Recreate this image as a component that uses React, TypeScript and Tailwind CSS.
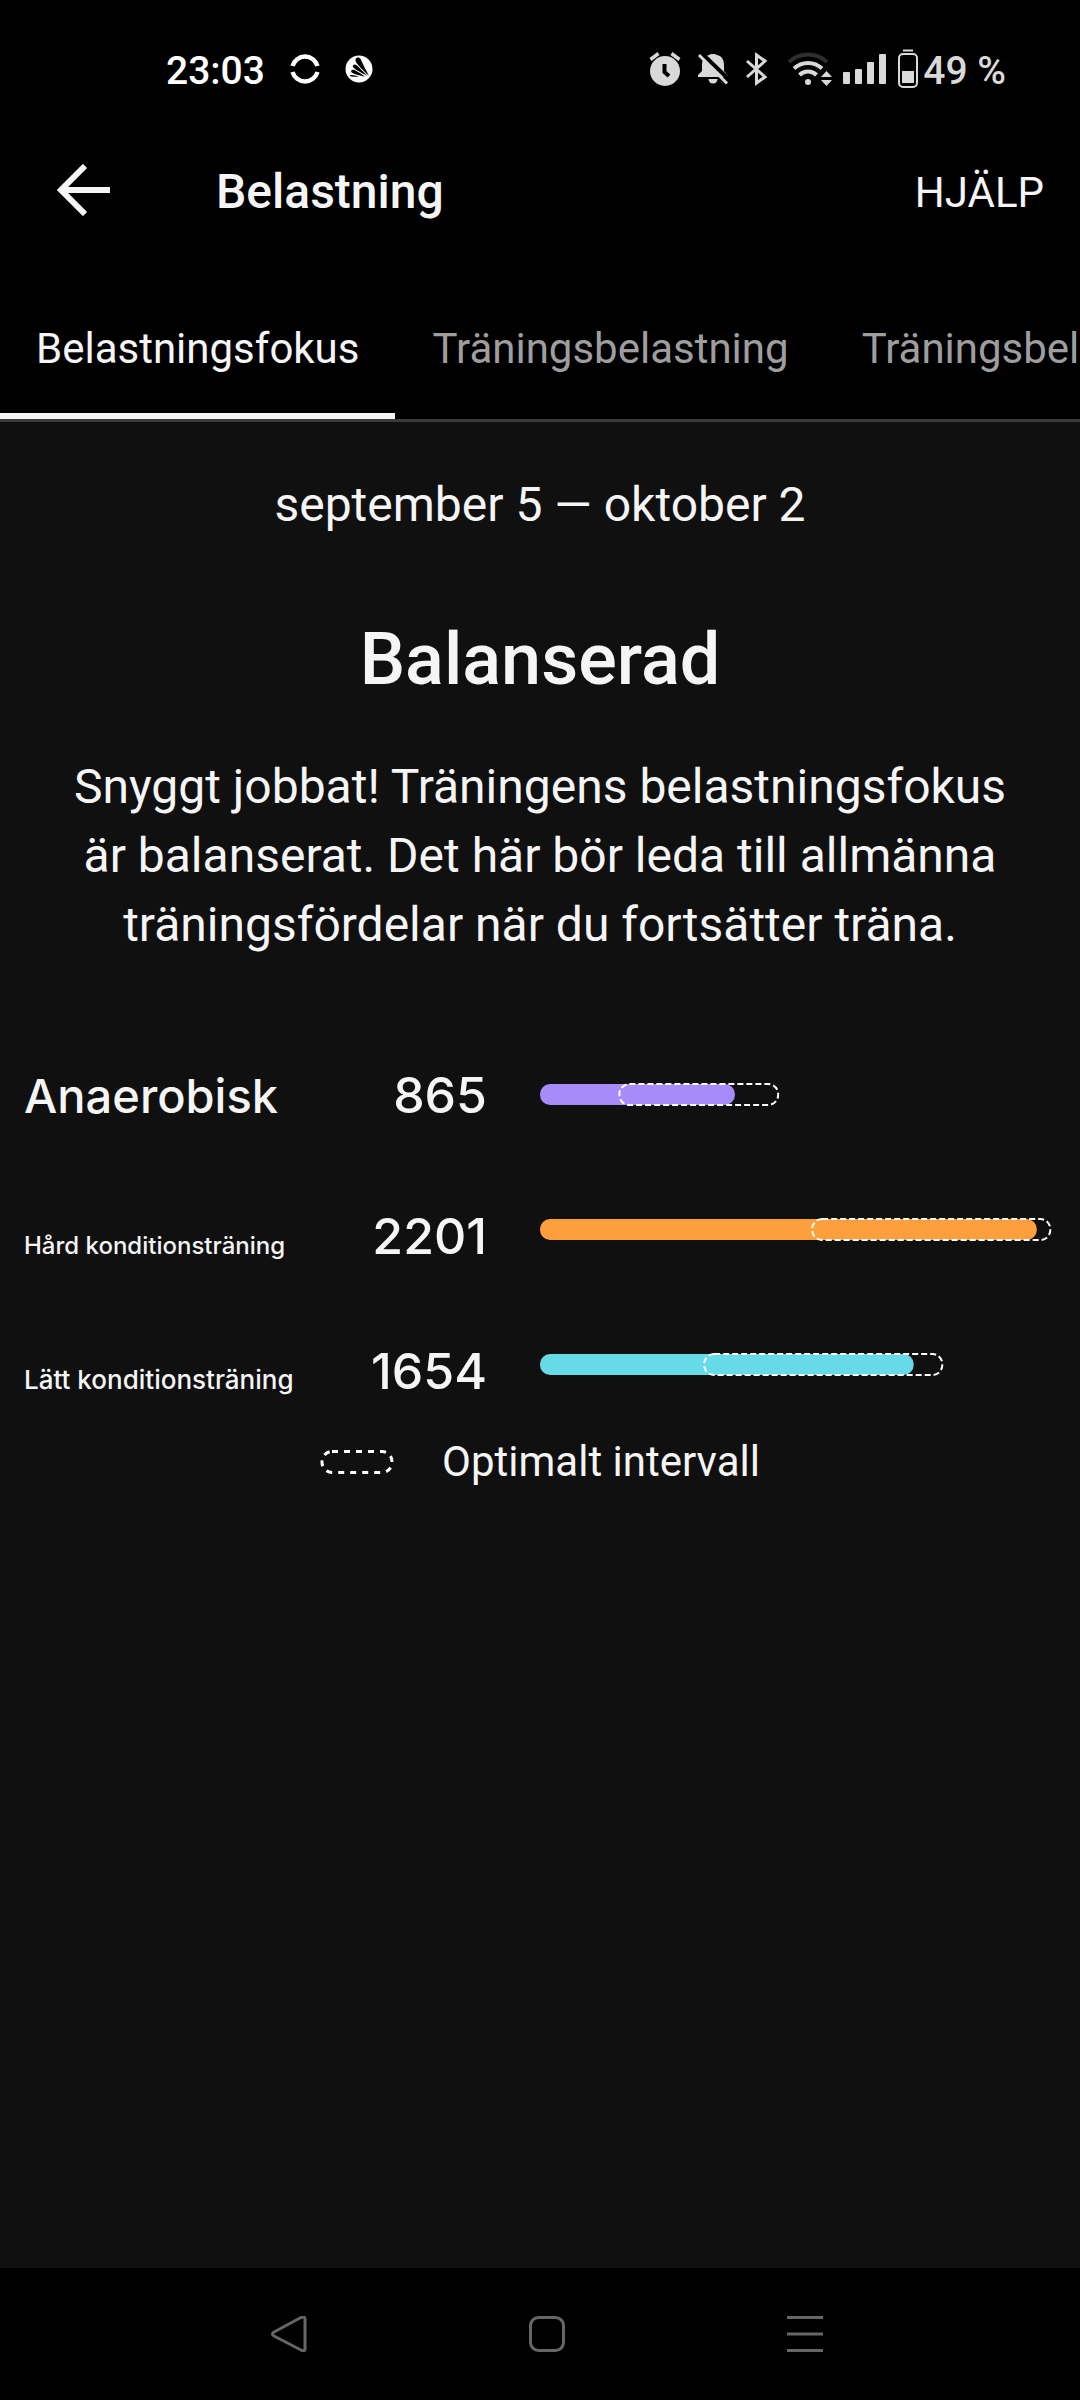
import { useState } from 'react';

interface LoadRow {
  label: string;
  value: number;
  color: string;
  labelSize: string;
  compact?: boolean;
  // all in percent of the chart column
  load: number;
  optimalStart: number;
  optimalWidth: number;
}

const TABS = ['Belastningsfokus', 'Träningsbelastning', 'Träningsbelastningskvot'];

const ROWS: LoadRow[] = [
  { label: 'Anaerobisk', value: 865, color: '#a78bfa', labelSize: 'text-[47px]', load: 36.1, optimalStart: 14.7, optimalWidth: 29.4 },
  { label: 'Hård konditionsträning', value: 2201, color: '#fe9f3e', labelSize: 'text-[24px]', compact: true, load: 92, optimalStart: 50.4, optimalWidth: 44.1 },
  { label: 'Lätt konditionsträning', value: 1654, color: '#67dae8', labelSize: 'text-[26px]', compact: true, load: 69.2, optimalStart: 30.4, optimalWidth: 44.1 },
];

function StatusBar() {
  return (
    <div className="flex h-[138px] items-center justify-between pr-[74px] pl-[166px] text-[39px] leading-none font-medium">
      <div className="flex items-center gap-6">
        <span className="pt-1 text-white">23:03</span>
        <svg className="size-8" viewBox="0 0 32 32" fill="none" stroke="#fff" strokeWidth="4.5">
          <path d="M3.5 13A13 13 0 0 1 28.5 13M3.5 19A13 13 0 0 0 28.5 19" />
        </svg>
        <svg className="size-7" viewBox="0 0 28 28">
          <circle cx="14" cy="14" r="13.5" fill="#fff" />
          <g fill="#000">
            <path d="M24 21C19 16 11 9 10.500 5.500C10 2 14.500 1.500 15.800 4.500C18 9.500 21 15 24 21Z" />
            <path d="M22.500 21C17 18 9.500 14.500 8 12C7 9.500 10 8.500 12 10.500C15.500 14 19 17.500 22.500 21Z" />
            <path d="M20 21.500C15 20.500 8.500 19 6.500 17.200C5 15.200 7.500 14 9.500 15C13 17 16.500 19 20 21.500Z" />
            <path d="M14 21.500C10 22 6.500 21.800 4.500 20.800C5.500 19.300 10 20.500 14 21.500Z" />
          </g>
        </svg>
      </div>

      <div className="flex items-center text-[#d9d9d9]">
        {/* Alarm */}
        <svg className="h-[34px] w-8" viewBox="0 0 32 34" fill="none" stroke="currentColor">
          <circle cx="16" cy="19" r="15" fill="currentColor" stroke="none" />
          <path d="M1.500 7.500L9.500 1.500M30.500 7.500L22.500 1.500" strokeWidth="3.500" />
          <path d="M15.500 12V20L20 24" stroke="#000" strokeWidth="4" />
        </svg>
        {/* Notifications off */}
        <svg className="ml-4 h-[34px] w-8" viewBox="0 0 32 34">
          <path fill="currentColor" d="M1 25V23L5 19V13C5 7 8 4 12 3C13 1.500 19 1.500 20 3C25 4 27 8 27 13V19L31 24V25Z" />
          <path fill="currentColor" d="M11.500 27H20.500A4.500 4.500 0 0 1 11.500 27Z" />
          <path d="M4.500 1L32 27.500" stroke="#000" strokeWidth="4" />
          <path d="M2 3L30 31.500" stroke="currentColor" strokeWidth="3" />
        </svg>
        {/* Bluetooth */}
        <svg className="ml-4 h-[34px] w-6" viewBox="0 0 24 34" fill="none" stroke="currentColor" strokeWidth="3">
          <path d="M2 9L20 25L11.500 31V3L20 9L2 25" />
        </svg>
        {/* Wifi */}
        <svg className="ml-[18px] h-[34px] w-[46px]" viewBox="0 0 46 34" fill="none" stroke="currentColor" strokeWidth="4">
          <path d="M2 10Q10 2.500 21 2.500T40 10" stroke="#2e2e2e" />
          <path d="M7 16.500Q13 11 21 11T35 16.500M12.500 23Q16 19.500 21 19.500T29.500 23" />
          <circle cx="21" cy="30" r="3" fill="currentColor" stroke="none" />
          <path d="M34 25L39.500 19L45 25ZM34 28L39.500 34L45 28Z" fill="currentColor" stroke="none" />
        </svg>
        {/* Signal */}
        <svg className="ml-2.5 h-[34px] w-11" viewBox="0 0 44 34" fill="currentColor">
          <rect x="0" y="20" width="7" height="12" rx="1" />
          <rect x="12" y="17" width="7" height="15" rx="1" />
          <rect x="24" y="10" width="7" height="22" rx="1" />
          <rect x="36" y="2" width="7" height="30" rx="1" />
        </svg>
        {/* Battery */}
        <svg className="ml-2.5 h-10 w-[22px]" viewBox="0 0 22 40" fill="none" stroke="currentColor" strokeWidth="2">
          <path d="M6 1.500H16" />
          <rect x="2" y="5" width="18" height="33" rx="4" />
          <rect x="5" y="22" width="12" height="12" fill="currentColor" stroke="none" />
        </svg>
        <span className="pt-1 pl-1">49 %</span>
      </div>
    </div>
  );
}

function LoadBar({ row }: { row: LoadRow }) {
  return (
    <svg className="h-6 w-full" role="img" aria-label={`${row.label}: ${row.value}`}>
      <rect x="0" y="1" width={`${row.load}%`} height="21" rx="10" fill={row.color} />
      <rect
        x={`${row.optimalStart}%`}
        y="1"
        width={`${row.optimalWidth}%`}
        height="21"
        rx="10"
        fill="none"
        stroke="#fff"
        strokeWidth="2"
        strokeDasharray="6 3"
      />
    </svg>
  );
}

export default function App() {
  const [activeTab, setActiveTab] = useState(TABS[0]);

  return (
    <div className="flex min-h-screen flex-col bg-black font-[Roboto,sans-serif] text-[#f5f5f5]">
      <StatusBar />

      <header className="flex h-[108px] items-center pr-9 pl-14">
        <button type="button" aria-label="Tillbaka" className="pb-1">
          <svg className="h-[52px] w-[54px]" viewBox="0 0 54 52" fill="none" stroke="currentColor" strokeWidth="6">
            <path d="M54 26H6M29 2L5 26L29 50" />
          </svg>
        </button>
        <h1 className="ml-[106px] text-5xl font-medium">Belastning</h1>
        <button type="button" className="ml-auto text-[42px]">HJÄLP</button>
      </header>

      <nav role="tablist" className="flex h-44 gap-px overflow-hidden border-b-3 border-[#3b3b3b]">
        {TABS.map((tab) => (
          <button
            key={tab}
            type="button"
            role="tab"
            aria-selected={tab === activeTab}
            onClick={() => setActiveTab(tab)}
            className={`shrink-0 border-b-6 px-9 pt-[38px] text-[42px] whitespace-nowrap ${
              tab === activeTab ? 'border-[#f5f5f5]' : 'border-transparent text-[#9e9e9e]'
            }`}
          >
            {tab}
          </button>
        ))}
      </nav>

      <main className="flex-1 bg-[#101010] pt-12">
        <p className="text-center text-5xl leading-[70px]">september 5 — oktober 2</p>
        <h2 className="mt-[72px] text-center text-7xl leading-[96px] font-medium">Balanserad</h2>
        <p className="mt-11 px-12 text-center text-5xl leading-[69px]">
          Snyggt jobbat! Träningens belastningsfokus är balanserat. Det här bör leda till allmänna
          träningsfördelar när du fortsätter träna.
        </p>

        <div className="mt-[68px]">
          {ROWS.map((row) => (
            <div key={row.label} className="grid h-[135px] grid-cols-2 items-center">
              <div
                className={`flex items-baseline justify-between pr-[53px] pl-6 font-[Inter,sans-serif] text-[50px] leading-none font-medium ${
                  row.compact ? 'pt-3' : ''
                }`}
              >
                <span className={row.labelSize}>{row.label}</span>
                <span>{row.value}</span>
              </div>
              <LoadBar row={row} />
            </div>
          ))}
        </div>

        <div className="flex items-center justify-center gap-12">
          <svg className="h-6 w-[74px]" viewBox="0 0 74 24" fill="none" stroke="#fff" strokeWidth="3">
            <rect x="2" y="1.5" width="70" height="21" rx="10" strokeDasharray="6 6" />
          </svg>
          <span className="text-[42px] leading-[60px]">Optimalt intervall</span>
        </div>
      </main>

      <nav className="flex h-[132px] items-center justify-between pr-[257px] pl-[271px] text-[#666]">
        <button type="button" aria-label="Bakåt">
          <svg className="size-9" viewBox="0 0 36 36" fill="none" stroke="currentColor" strokeWidth="3" strokeLinejoin="round">
            <path d="M3 16L30 1.500Q34 0 34 3V33Q34 36 30 34L3 20Q0 18 3 16Z" />
          </svg>
        </button>
        <button type="button" aria-label="Hem">
          <svg className="size-9" viewBox="0 0 36 36" fill="none" stroke="currentColor" strokeWidth="3">
            <rect x="1.500" y="1.500" width="33" height="33" rx="8" />
          </svg>
        </button>
        <button type="button" aria-label="Senaste appar">
          <svg className="size-9" viewBox="0 0 36 36" fill="none" stroke="currentColor" strokeWidth="3">
            <path d="M0 1.500H36M0 18H36M0 34.500H36" />
          </svg>
        </button>
      </nav>
    </div>
  );
}
